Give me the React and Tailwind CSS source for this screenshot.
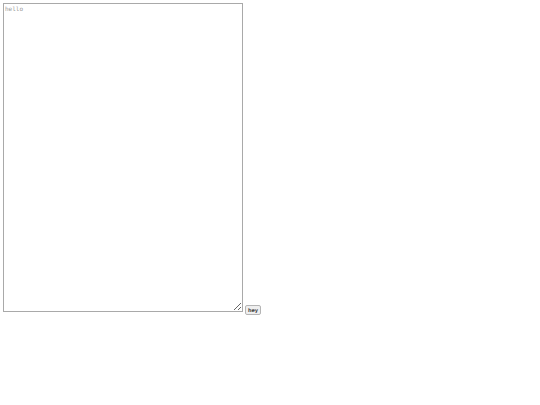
export default function App() {
  return (
    <div className="p-[3px] flex items-end gap-[2px]">
      <textarea
        placeholder="hello"
        className="w-[240px] h-[309px] border border-[#a9a9a9] p-[1px] text-[6px] leading-[8px] font-['DejaVu_Sans_Mono',monospace] placeholder:text-[#999] outline-none resize"
      />
      <button className="mb-[-3px] h-[10px] w-[16px] border border-[#b5b5b5] rounded-[2px] bg-[#efefef] text-[5px] leading-none font-bold text-[#444] font-['DejaVu_Sans',sans-serif]">
        hey
      </button>
    </div>
  );
}
